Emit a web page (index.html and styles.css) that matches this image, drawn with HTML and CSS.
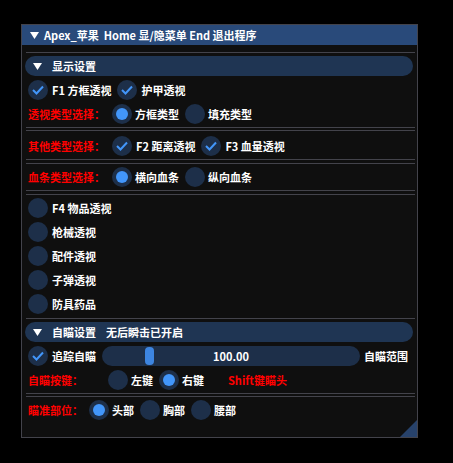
FILE: index.html
```html
<!DOCTYPE html>
<html lang="zh-CN">
<head>
    <meta charset="UTF-8">
    <title>Apex</title>
<link rel="stylesheet" href="styles.css">
</head>
<body>
    <div class="win">
        <div class="titlebar">
            <svg class="tri" width="9" height="7" viewBox="0 0 9 7"><polygon points="0,0 9,0 4.5,7" fill="#fff"/></svg>
            <span>Apex_苹果&nbsp; Home 显/隐菜单 End 退出程序</span>
        </div>

        <div class="content">
            <div class="sep mt7"></div>

            <div class="header mt3">
                <svg class="tri" width="9" height="7" viewBox="0 0 9 7"><polygon points="0,0 9,0 4.5,7" fill="#fff"/></svg>
                <span>显示设置</span>
            </div>

            <div class="row mt4">
                <div class="opt"><span class="box"><svg width="12" height="10" viewBox="0 0 12 10"><polyline points="1,5 4.5,8.5 11,1.5" fill="none" stroke="#4296fa" stroke-width="2"/></svg></span>F1 方框透视</div>
                <div class="opt"><span class="box"><svg width="12" height="10" viewBox="0 0 12 10"><polyline points="1,5 4.5,8.5 11,1.5" fill="none" stroke="#4296fa" stroke-width="2"/></svg></span>护甲透视</div>
            </div>

            <div class="row mt4">
                <span class="lbl w84">透视类型选择：</span>
                <div class="opt radio"><span class="box"><i class="dot"></i></span>方框类型</div>
                <div class="opt radio"><span class="box"></span>填充类型</div>
            </div>

            <div class="sep mt3"></div>
            <div class="sep mt2"></div>

            <div class="row mt5">
                <span class="lbl w84">其他类型选择：</span>
                <div class="opt"><span class="box"><svg width="12" height="10" viewBox="0 0 12 10"><polyline points="1,5 4.5,8.5 11,1.5" fill="none" stroke="#4296fa" stroke-width="2"/></svg></span>F2 距离透视</div>
                <div class="opt"><span class="box"><svg width="12" height="10" viewBox="0 0 12 10"><polyline points="1,5 4.5,8.5 11,1.5" fill="none" stroke="#4296fa" stroke-width="2"/></svg></span>F3 血量透视</div>
            </div>

            <div class="sep mt3"></div>
            <div class="sep mt3"></div>

            <div class="row mt3">
                <span class="lbl w84">血条类型选择：</span>
                <div class="opt radio"><span class="box"><i class="dot"></i></span>横向血条</div>
                <div class="opt radio"><span class="box"></span>纵向血条</div>
            </div>

            <div class="sep mt3"></div>
            <div class="sep mt3"></div>

            <div class="row mt3"><div class="opt"><span class="box"></span>F4 物品透视</div></div>
            <div class="row mt4"><div class="opt"><span class="box"></span>枪械透视</div></div>
            <div class="row mt4"><div class="opt"><span class="box"></span>配件透视</div></div>
            <div class="row mt4"><div class="opt"><span class="box"></span>子弹透视</div></div>
            <div class="row mt4"><div class="opt"><span class="box"></span>防具药品</div></div>

            <div class="sep mt4"></div>

            <div class="header mt3">
                <svg class="tri" width="9" height="7" viewBox="0 0 9 7"><polygon points="0,0 9,0 4.5,7" fill="#fff"/></svg>
                <span>自瞄设置</span>
                <span class="note">无后瞬击已开启</span>
            </div>

            <div class="row mt4">
                <div class="opt"><span class="box"><svg width="12" height="10" viewBox="0 0 12 10"><polyline points="1,5 4.5,8.5 11,1.5" fill="none" stroke="#4296fa" stroke-width="2"/></svg></span>追踪自瞄</div>
                <div class="slider">
                    <span class="grab"></span>
                    <span class="val">100.00</span>
                </div>
                <span class="slider-lbl">自瞄范围</span>
            </div>

            <div class="row mt4">
                <span class="lbl w80">自瞄按键：</span>
                <div class="opt radio"><span class="box"></span>左键</div>
                <div class="opt radio"><span class="box"><i class="dot"></i></span>右键</div>
                <span class="lbl shift">Shift键瞄头</span>
            </div>

            <div class="sep mt3"></div>
            <div class="sep mt2"></div>

            <div class="row mt3">
                <span class="lbl w61">瞄准部位：</span>
                <div class="opt radio"><span class="box"><i class="dot"></i></span>头部</div>
                <div class="opt radio"><span class="box"></span>胸部</div>
                <div class="opt radio"><span class="box"></span>腰部</div>
            </div>
        </div>

        <div class="grip"></div>
    </div>
</body>
</html>
```

FILE: styles.css
```css
*{
    margin: 0;
    padding: 0;
    box-sizing: border-box;
}
body{
    background: #000;
    padding: 24px 0 0 21px;
    font: bold 11px "Noto Sans CJK SC", sans-serif;
    color: #fff;
}
.win{
    width: 397px;
    height: 414px;
    border: 1px solid #43434b;
    background: #0f0f0f;
    position: relative;
}
.titlebar{
    height: 20px;
    background: #294a7a;
    display: flex;
    align-items: center;
    padding-left: 8px;
}
.tri{
    flex: none;
    margin-right: 5px;
}
.content{
    display: flex;
    flex-direction: column;
    padding: 0 4px 0 6px;
}
.sep{
    height: 1px;
    background: #43434b;
    margin-left: -2px;
    margin-right: -2px;
}
.mt2{ margin-top: 2px; }
.mt3{ margin-top: 3px; }
.mt4{ margin-top: 4px; }
.mt5{ margin-top: 5px; }
.mt7{ margin-top: 7px; }

.header{
    height: 20px;
    margin-left: -3px;
    border-radius: 10px;
    background: #1f3553;
    display: flex;
    align-items: center;
    padding-left: 8px;
}
.header .tri{
    margin-right: 10px;
}
.header .note{
    margin-left: 10px;
}

.row{
    height: 20px;
    display: flex;
    align-items: center;
    white-space: nowrap;
}
.opt{
    display: flex;
    align-items: center;
    gap: 4px;
    margin-right: 6px;
}
.radio{
    gap: 3px;
}
.box{
    width: 20px;
    height: 20px;
    border-radius: 50%;
    background: #1d2f49;
    display: flex;
    align-items: center;
    justify-content: center;
    flex: none;
}
.dot{
    width: 12px;
    height: 12px;
    border-radius: 50%;
    background: #4296fa;
}

.lbl{
    color: #f00;
    flex: none;
}
.w84{ width: 84px; }
.w80{ width: 80px; }
.w61{ width: 61px; }
.shift{
    margin-left: 18px;
}

.slider{
    position: relative;
    width: 258px;
    height: 20px;
    border-radius: 10px;
    background: #1d2f49;
    display: flex;
    align-items: center;
    justify-content: center;
    margin-right: 4px;
}
.grab{
    position: absolute;
    left: 43px;
    top: 1px;
    width: 9px;
    height: 18px;
    border-radius: 4px;
    background: #3d85e0;
}

.grip{
    position: absolute;
    right: 0;
    bottom: 0;
    width: 17px;
    height: 17px;
    background: #27426b;
    clip-path: polygon(100% 0, 100% 100%, 0 100%);
}
```
